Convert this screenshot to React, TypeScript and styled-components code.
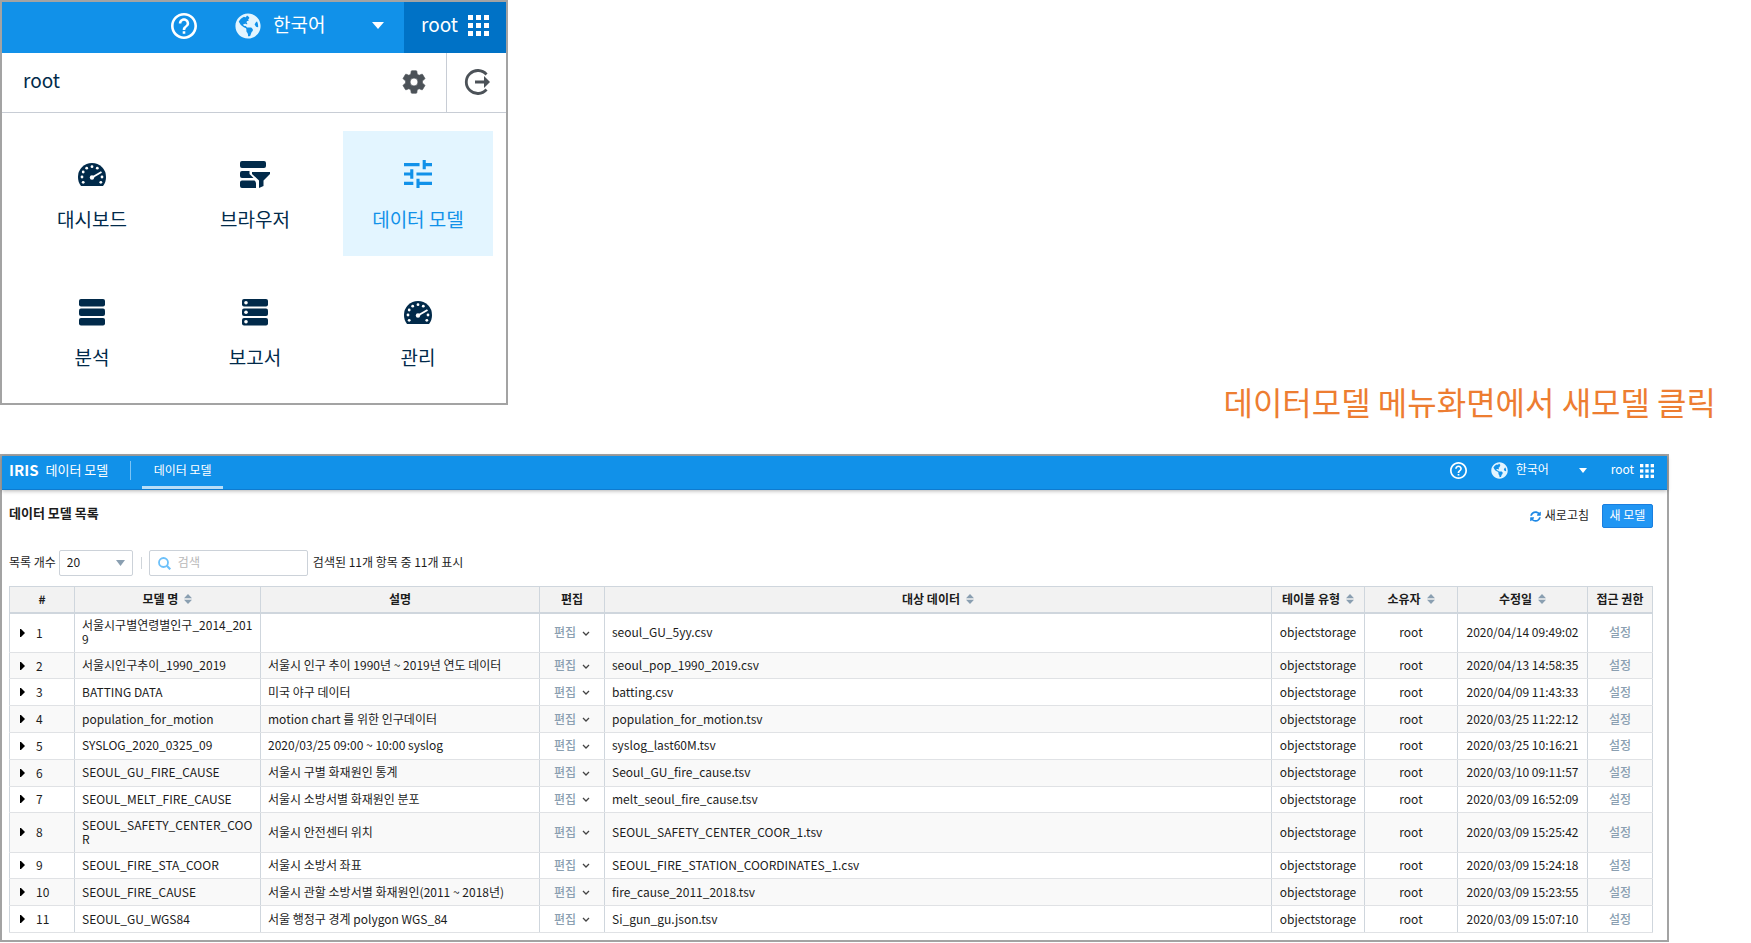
import React from "react";
import styled, { createGlobalStyle, css } from "styled-components";
import { FaGlobeAmericas, FaSyncAlt } from "react-icons/fa";

const Global = createGlobalStyle`
  *, *::before, *::after { box-sizing: border-box; }
  body { margin: 0; background: #fff; color: #1c1c1c; font: 12px/16px "Noto Sans CJK KR", sans-serif; }
  button, input, select { font: inherit; color: inherit; }
  a { color: inherit; text-decoration: none; }
`;

const plainButton = css`
  display: inline-flex;
  align-items: center;
  justify-content: center;
  padding: 0;
  border: 0;
  background: none;
  cursor: pointer;
`;

const Page = styled.div`
  display: flex;
  flex-direction: column;
`;

const Launcher = styled.section`
  width: 508px;
  border: 2px solid #a3a3a3;
`;

const LauncherBar = styled.header`
  display: flex;
  align-items: stretch;
  justify-content: flex-end;
  height: 51px;
  background: #1191e9;
  color: #fff;
  font-size: 19px;
  line-height: 24px;
`;

const BarButton = styled.button`
  ${plainButton}
  padding-bottom: 4px;
  color: #fff;
`;

const Language = styled.div<{ $wide?: boolean }>`
  display: flex;
  align-items: center;
  width: ${(p) => (p.$wide ? 149 : 96)}px;
  margin: 0 ${(p) => (p.$wide ? 20 : 24)}px 0 ${(p) => (p.$wide ? 38 : 24)}px;
  padding-bottom: 4px;
  gap: ${(p) => (p.$wide ? 12 : 8)}px;
`;

const LanguageSelect = styled.select`
  flex: 1;
  min-width: 0;
  padding: 0 0 3px;
  border: 0;
  appearance: none;
  background: none;
  color: #fff;
`;

const UserTab = styled.button`
  ${plainButton}
  gap: 10px;
  width: 102px;
  padding-bottom: 4px;
  background: #0072c6;
  color: #fff;
`;

const BarLabel = styled.span`
  padding-bottom: 3px;
`;

const UserRow = styled.div`
  display: flex;
  align-items: stretch;
  height: 60px;
  border-bottom: 1px solid #c8cdd5;
  color: #012a4a;
  font-size: 19px;
  line-height: 26px;
`;

const UserName = styled.span`
  flex: 1;
  padding: 14px 0 0 21px;
`;

const RowButton = styled.button<{ $divided?: boolean }>`
  ${plainButton}
  width: ${(p) => (p.$divided ? 60 : 65)}px;
  padding-bottom: 2px;
  border-left: ${(p) => (p.$divided ? "1px solid #c8cdd5" : "0")};
  color: #4c5258;
`;

const AppGrid = styled.nav`
  display: grid;
  grid-template-columns: repeat(3, 150px);
  gap: 13px;
  padding: 18px 0 9px 15px;
`;

const AppTile = styled.a<{ $active?: boolean }>`
  display: flex;
  flex-direction: column;
  align-items: center;
  gap: 17px;
  height: 125px;
  padding-top: 29px;
  background: ${(p) => (p.$active ? "#e3f5ff" : "transparent")};
  color: ${(p) => (p.$active ? "#1191e9" : "#012a4a")};
  font-size: 19px;
  line-height: 28px;
`;

const Caption = styled.p`
  height: 75px;
  margin: -26px 0 0;
  padding-right: 35px;
  color: #ed7d31;
  font-size: 32px;
  line-height: 44px;
  text-align: right;
`;

const Panel = styled.main`
  margin-right: 82px;
  border: 2px solid #a3a3a3;
`;

const PanelBar = styled.header`
  display: flex;
  align-items: stretch;
  height: 34px;
  padding: 0 13px 0 7px;
  background: #1191e9;
  border-bottom: 1px solid #0e7bd0;
  box-shadow: 0 1px 4px rgba(0, 0, 0, 0.3);
  color: #fff;
`;

const Brand = styled.a`
  display: flex;
  align-items: center;
  gap: 7px;
  padding-bottom: 5px;
  font-size: 13px;
  strong { font-size: 15px; }
`;

const Divider = styled.span<{ $pale?: boolean }>`
  align-self: center;
  width: 1px;
  height: ${(p) => (p.$pale ? 12 : 19)}px;
  margin: ${(p) => (p.$pale ? "0 7px 0 8px" : "0 11px 4px 22px")};
  background: ${(p) => (p.$pale ? "#d0d5da" : "#7cc4f5")};
`;

const ModelTab = styled.a`
  display: flex;
  align-items: center;
  justify-content: center;
  width: 81px;
  padding-bottom: 2px;
  border-bottom: 3px solid #b8def8;
`;

const Spacer = styled.span`
  flex: 1;
`;

const PanelUser = styled.button`
  ${plainButton}
  gap: 6px;
  padding-bottom: 4px;
  color: #fff;
`;

const Body = styled.div`
  padding: 14px 14px 7px 7px;
`;

const TitleRow = styled.div`
  display: flex;
  align-items: center;
  height: 24px;
  gap: 13px;
`;

const Title = styled.h1`
  flex: 1;
  margin: 0 0 6px;
  font-size: 13px;
  line-height: 16px;
`;

const Refresh = styled.button`
  ${plainButton}
  gap: 4px;
  svg { color: #1e88e5; }
`;

const NewModel = styled.button`
  ${plainButton}
  width: 51px;
  height: 24px;
  padding-bottom: 2px;
  border: 1px solid #1a7fe0;
  border-radius: 2px;
  background: #2196f3;
  color: #fff;
`;

const Filters = styled.div`
  display: flex;
  align-items: center;
  height: 26px;
  margin: 22px 0 10px;
`;

const FilterLabel = styled.label`
  padding-bottom: 2px;
`;

const FilterResult = styled.span`
  padding-bottom: 2px;
`;

const CountField = styled.span`
  position: relative;
  display: flex;
  width: 74px;
  height: 26px;
  margin-left: 3px;
  color: #8a9fb1;
  svg { position: absolute; right: 8px; top: 10px; pointer-events: none; }
`;

const CountSelect = styled.select`
  width: 100%;
  padding: 0 7px 2px;
  border: 1px solid #ccd2d9;
  border-radius: 2px;
  appearance: none;
  background: #fff;
  color: #1c1c1c;
`;

const SearchField = styled.label`
  display: flex;
  align-items: center;
  gap: 7px;
  width: 159px;
  height: 26px;
  margin-right: 5px;
  padding: 0 8px;
  border: 1px solid #ccd2d9;
  border-radius: 2px;
`;

const SearchInput = styled.input`
  flex: 1;
  min-width: 0;
  padding: 0 0 2px;
  border: 0;
  outline: 0;
  background: none;
  &::placeholder { color: #b8b8b8; }
`;

const Table = styled.table`
  width: 100%;
  height: 347px;
  table-layout: fixed;
  border-collapse: collapse;
  border: 1px solid #cfd6dd;
`;

const Col = styled.col<{ $w?: number }>`
  width: ${(p) => (p.$w ? `${p.$w}px` : "auto")};
`;

const HeadCell = styled.th`
  height: 26px;
  padding: 0;
  border: 1px solid #cfd6dd;
  border-bottom: 2px solid #cfd6dd;
  background: #f2f2f2;
`;

const HeadLabel = styled.span`
  display: flex;
  align-items: center;
  justify-content: center;
  gap: 6px;
`;

const Row = styled.tr`
  &:nth-child(even) { background: #f9f9f9; }
`;

const Cell = styled.td<{ $center?: boolean }>`
  height: 26px;
  padding: 4px 7px 5px;
  border: 1px solid #cfd6dd;
  border-top-color: #e0e2e5;
  border-bottom-color: #e0e2e5;
  line-height: 14px;
  text-align: ${(p) => (p.$center ? "center" : "left")};
  word-break: break-all;
`;

const IndexButton = styled.button`
  ${plainButton}
  gap: 11px;
  margin-left: 3px;
`;

const MutedButton = styled.button`
  ${plainButton}
  gap: 6px;
  color: #8a9fb1;
  font-weight: 500;
  svg { margin-top: 3px; }
`;

const HelpIcon = ({ size }: { size: number }) => (
  <svg width={size} height={size} viewBox="2 2 20 20" fill="currentColor">
    <path d="M11 18h2v-2h-2v2zm1-16C6.480 2 2 6.480 2 12s4.480 10 10 10 10-4.480 10-10S17.520 2 12 2zm0 18c-4.410 0-8-3.590-8-8s3.590-8 8-8 8 3.590 8 8-3.590 8-8 8zm0-14c-2.210 0-4 1.790-4 4h2c0-1.100.9-2 2-2s2 .9 2 2c0 2-3 1.750-3 5h2c0-2.250 3-2.500 3-5 0-2.210-1.790-4-4-4z" />
  </svg>
);

const Caret = ({ width, height }: { width: number; height: number }) => (
  <svg width={width} height={height} viewBox="0 0 12 7" preserveAspectRatio="none" fill="currentColor">
    <path d="M0 0h12L6 7z" />
  </svg>
);

const AppsIcon = ({ size }: { size: number }) => (
  <svg width={size} height={size} viewBox="0 0 21 21" fill="currentColor">
    {[0, 8, 16].map((y) => [0, 8, 16].map((x) => <rect key={`${x}-${y}`} x={x} y={y} width="5" height="5" />))}
  </svg>
);

const GearIcon = () => (
  <svg width="28" height="28" viewBox="0 0 24 24" fill="currentColor" stroke="currentColor" strokeWidth="0.600">
    <path d="M19.140 12.940c.04-.3.06-.61.06-.94s-.02-.64-.07-.94l2.030-1.580c.18-.14.23-.41.12-.61l-1.920-3.320c-.12-.22-.37-.29-.59-.22l-2.390.96c-.5-.38-1.030-.7-1.620-.94l-.36-2.540c-.04-.24-.24-.41-.48-.41h-3.840c-.24 0-.43.17-.47.41l-.36 2.540c-.59.24-1.130.57-1.620.94l-2.390-.96c-.22-.08-.47 0-.59.22L2.740 8.870c-.12.21-.08.47.12.61l2.030 1.580c-.05.3-.09.63-.09.94s.02.64.07.94l-2.030 1.580c-.18.14-.23.41-.12.61l1.920 3.320c.12.22.37.29.59.22l2.390-.96c.5.38 1.030.7 1.620.94l.36 2.540c.05.24.24.41.48.41h3.840c.24 0 .44-.17.47-.41l.36-2.540c.59-.24 1.130-.56 1.620-.94l2.390.96c.22.08.47 0 .59-.22l1.920-3.320c.12-.22.07-.47-.12-.61l-2.010-1.580zM12 15.400a3.400 3.400 0 1 1 0-6.800 3.400 3.400 0 0 1 0 6.800z" />
  </svg>
);

const LogoutIcon = () => (
  <svg width="27" height="26" viewBox="0 0 27 26" fill="none" stroke="currentColor" strokeWidth="2.800">
    <path d="M23.500 5.500A11.500 11.500 0 1 0 23.500 20.500M12 13h10" />
    <path d="m21 7 6 6-6 6z" fill="currentColor" stroke="none" />
  </svg>
);

const GaugeIcon = () => (
  <svg width="28" height="28" viewBox="0 0 28 28">
    <path fill="currentColor" d="M14 3A14 14 0 0 0 0 17c0 3.500 1 6.500 3 9h22c2-2.500 3-5.500 3-9A14 14 0 0 0 14 3z" />
    <g fill="#fff">
      {[[4, 17], [5.2, 12], [8.7, 8.2], [14, 6.7], [19.3, 8.2], [24, 17], [5.2, 22.3], [22.8, 22.3]].map(([x, y]) => (
        <circle key={`${x}-${y}`} cx={x} cy={y} r="1.400" />
      ))}
      <circle cx="14" cy="17.500" r="2.200" />
    </g>
    <path d="m14 17.500 9.500-5.500" stroke="#fff" strokeWidth="2" />
  </svg>
);

const BrowserIcon = () => (
  <svg width="30" height="28" viewBox="0 0 30 28" fill="currentColor">
    <path d="M2 1h22q2 0 2 2v3q0 2-2 2H2Q0 8 0 6V3q0-2 2-2zM2 11h7.500v3l4 4H2q-2 0-2-2v-3q0-2 2-2zM2 20.500h12.500q1.500 1 1.500 3V28H2q-2 0-2-2v-3.500q0-2 2-2zM12 12h18v2l-6.500 6.500V26l-4.500 2v-7.500L12 14z" />
  </svg>
);

const TuneIcon = () => (
  <svg width="28" height="28" viewBox="3 3 18 18" fill="currentColor">
    <path d="M3 17v2h6v-2H3zM3 5v2h10V5H3zm10 16v-2h8v-2h-8v-2h-2v6h2zM7 9v2H3v2h4v2h2V9H7zm14 4v-2H11v2h10zm-6-4h2V7h4V5h-4V3h-2v6z" />
  </svg>
);

const StackIcon = ({ dots }: { dots?: boolean }) => (
  <svg width="28" height="28" viewBox="0 0 28 28">
    {[1, 10.5, 20].map((y) => (
      <g key={y}>
        <rect x="1" y={y} width="26" height="7.500" rx="2" fill="currentColor" />
        {dots && <circle cx="5" cy={y + 3.75} r="1.800" fill="#fff" />}
      </g>
    ))}
  </svg>
);

const SearchIcon = () => (
  <svg width="13" height="13" viewBox="0 0 13 13" fill="none" stroke="#6cc0fa" strokeWidth="1.800">
    <circle cx="5.500" cy="5.500" r="4.500" />
    <path d="m8.800 8.800 3.500 3.500" strokeWidth="2.200" />
  </svg>
);

const SortIcon = () => (
  <svg width="8" height="10" viewBox="0 0 8 10" fill="#8a9fb1">
    <path d="M0 4.300 4 0l4 4.300zM0 5.700h8L4 10z" />
  </svg>
);

const ExpandIcon = () => (
  <svg width="5" height="8" viewBox="0 0 5 8" fill="#000">
    <path d="M0 0h1l4 4-4 4H0z" />
  </svg>
);

const ChevronIcon = () => (
  <svg width="8" height="6" viewBox="0 0 8 6" fill="none" stroke="#444" strokeWidth="1.300">
    <path d="m1 1 3 3 3-3" />
  </svg>
);

const apps = [
  { label: "대시보드", icon: <GaugeIcon /> },
  { label: "브라우저", icon: <BrowserIcon /> },
  { label: "데이터 모델", icon: <TuneIcon />, active: true },
  { label: "분석", icon: <StackIcon /> },
  { label: "보고서", icon: <StackIcon dots /> },
  { label: "관리", icon: <GaugeIcon /> },
];

const columns: { label: string; width?: number; sort?: boolean }[] = [
  { label: "#", width: 65 },
  { label: "모델 명", width: 186, sort: true },
  { label: "설명", width: 279 },
  { label: "편집", width: 65 },
  { label: "대상 데이터", sort: true },
  { label: "테이블 유형", width: 93, sort: true },
  { label: "소유자", width: 93, sort: true },
  { label: "수정일", width: 130, sort: true },
  { label: "접근 권한", width: 65 },
];

const models = [
  ["서울시구별연령별인구_2014_2019", "", "seoul_GU_5yy.csv", "2020/04/14 09:49:02"],
  ["서울시인구추이_1990_2019", "서울시 인구 추이 1990년 ~ 2019년 연도 데이터", "seoul_pop_1990_2019.csv", "2020/04/13 14:58:35"],
  ["BATTING DATA", "미국 야구 데이터", "batting.csv", "2020/04/09 11:43:33"],
  ["population_for_motion", "motion chart 를 위한 인구데이터", "population_for_motion.tsv", "2020/03/25 11:22:12"],
  ["SYSLOG_2020_0325_09", "2020/03/25 09:00 ~ 10:00 syslog", "syslog_last60M.tsv", "2020/03/25 10:16:21"],
  ["SEOUL_GU_FIRE_CAUSE", "서울시 구별 화재원인 통계", "Seoul_GU_fire_cause.tsv", "2020/03/10 09:11:57"],
  ["SEOUL_MELT_FIRE_CAUSE", "서울시 소방서별 화재원인 분포", "melt_seoul_fire_cause.tsv", "2020/03/09 16:52:09"],
  ["SEOUL_SAFETY_CENTER_COOR", "서울시 안전센터 위치", "SEOUL_SAFETY_CENTER_COOR_1.tsv", "2020/03/09 15:25:42"],
  ["SEOUL_FIRE_STA_COOR", "서울시 소방서 좌표", "SEOUL_FIRE_STATION_COORDINATES_1.csv", "2020/03/09 15:24:18"],
  ["SEOUL_FIRE_CAUSE", "서울시 관할 소방서별 화재원인(2011 ~ 2018년)", "fire_cause_2011_2018.tsv", "2020/03/09 15:23:55"],
  ["SEOUL_GU_WGS84", "서울 행정구 경계 polygon WGS_84", "Si_gun_gu.json.tsv", "2020/03/09 15:07:10"],
];

export default function App() {
  return (
    <Page>
      <Global />
      <Launcher>
        <LauncherBar>
          <BarButton aria-label="도움말"><HelpIcon size={26} /></BarButton>
          <Language $wide>
            <FaGlobeAmericas size={26} color="#e3f5ff" />
            <LanguageSelect aria-label="언어"><option>한국어</option></LanguageSelect>
            <Caret width={12} height={7} />
          </Language>
          <UserTab><BarLabel>root</BarLabel><AppsIcon size={21} /></UserTab>
        </LauncherBar>
        <UserRow>
          <UserName>root</UserName>
          <RowButton aria-label="환경 설정"><GearIcon /></RowButton>
          <RowButton $divided aria-label="로그아웃"><LogoutIcon /></RowButton>
        </UserRow>
        <AppGrid>
          {apps.map((app) => (
            <AppTile key={app.label} href="#" $active={app.active}>
              {app.icon}
              {app.label}
            </AppTile>
          ))}
        </AppGrid>
      </Launcher>

      <Caption>데이터모델 메뉴화면에서 새모델 클릭</Caption>

      <Panel>
        <PanelBar>
          <Brand href="#"><strong>IRIS</strong> 데이터 모델</Brand>
          <Divider />
          <ModelTab href="#">데이터 모델</ModelTab>
          <Spacer />
          <BarButton aria-label="도움말"><HelpIcon size={17} /></BarButton>
          <Language>
            <FaGlobeAmericas size={17} color="#e3f5ff" />
            <LanguageSelect aria-label="언어"><option>한국어</option></LanguageSelect>
            <Caret width={8} height={5} />
          </Language>
          <PanelUser><BarLabel>root</BarLabel><AppsIcon size={14} /></PanelUser>
        </PanelBar>
        <Body>
          <TitleRow>
            <Title>데이터 모델 목록</Title>
            <Refresh><FaSyncAlt size={11} /><BarLabel>새로고침</BarLabel></Refresh>
            <NewModel>새 모델</NewModel>
          </TitleRow>
          <Filters>
            <FilterLabel htmlFor="page-size">목록 개수</FilterLabel>
            <CountField>
              <CountSelect id="page-size"><option>20</option></CountSelect>
              <Caret width={9} height={6} />
            </CountField>
            <Divider $pale />
            <SearchField>
              <SearchIcon />
              <SearchInput placeholder="검색" aria-label="검색" />
            </SearchField>
            <FilterResult>검색된 11개 항목 중 11개 표시</FilterResult>
          </Filters>
          <Table>
            <colgroup>
              {columns.map((c) => <Col key={c.label} $w={c.width} />)}
            </colgroup>
            <thead>
              <tr>
                {columns.map((c) => (
                  <HeadCell key={c.label}>
                    <HeadLabel>{c.label}{c.sort && <SortIcon />}</HeadLabel>
                  </HeadCell>
                ))}
              </tr>
            </thead>
            <tbody>
              {models.map(([name, description, target, modified], i) => (
                <Row key={name}>
                  <Cell><IndexButton><ExpandIcon />{i + 1}</IndexButton></Cell>
                  <Cell>{name}</Cell>
                  <Cell>{description}</Cell>
                  <Cell $center><MutedButton>편집 <ChevronIcon /></MutedButton></Cell>
                  <Cell>{target}</Cell>
                  <Cell $center>objectstorage</Cell>
                  <Cell $center>root</Cell>
                  <Cell $center>{modified}</Cell>
                  <Cell $center><MutedButton>설정</MutedButton></Cell>
                </Row>
              ))}
            </tbody>
          </Table>
        </Body>
      </Panel>
    </Page>
  );
}
